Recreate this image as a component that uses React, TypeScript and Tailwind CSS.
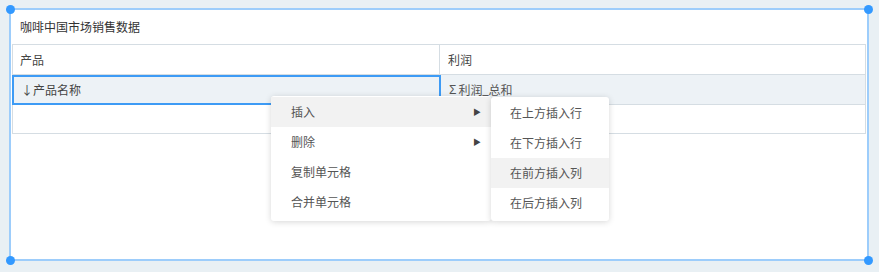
const mainItems = [
  { label: '插入', sub: true, active: true },
  { label: '删除', sub: true, active: false },
  { label: '复制单元格', sub: false, active: false },
  { label: '合并单元格', sub: false, active: false },
];

const subItems = ['在上方插入行', '在下方插入行', '在前方插入列', '在后方插入列'];

function Handle({ className }: { className: string }) {
  return <span className={`absolute h-[9px] w-[9px] rounded-full bg-[#3399ff] ${className}`} />;
}

export default function App() {
  return (
    <div
      className="relative h-[272px] w-[879px] bg-[#e9f0f4] pl-[9px] pt-[8px] text-[12px] text-[#333]"
      style={{ fontFamily: '"Noto Sans CJK SC", "Noto Sans", sans-serif' }}
    >
      <div className="relative flex h-[253px] w-[860px] flex-col border-2 border-[#9dcdfb] bg-white">
        <Handle className="-left-[5px] -top-[5px]" />
        <Handle className="-right-[6px] -top-[5px]" />
        <Handle className="-bottom-[6px] -left-[5px]" />
        <Handle className="-bottom-[6px] -right-[6px]" />

        <div className="flex h-[34px] items-center pl-[9px]">咖啡中国市场销售数据</div>

        <div className="mx-[1px] border border-[#d5dde3]">
          <div className="flex h-[30px] border-b border-[#d5dde3] text-[#444]">
            <div className="flex w-[427px] items-center border-r border-[#d5dde3] pl-[7px]">产品</div>
            <div className="flex flex-1 items-center pl-[8px]">利润</div>
          </div>
          <div className="flex h-[30px] border-b border-[#d5dde3] bg-[#edf2f6] text-[#444]">
            <div className="-mb-[1px] -ml-[1px] flex w-[429px] items-center border-2 border-[#3d9bf5] pl-[7px]">
              ↓产品名称
            </div>
            <div className="flex flex-1 items-center pl-[8px] leading-[16px] text-[#555]">
              <span className="mr-[2px] font-['Liberation_Sans']">Σ</span>
              <span>利润</span>
              <span className="relative -top-[1px] font-['DejaVu_Sans']">_</span>
              <span>总和</span>
            </div>
          </div>
          <div className="flex h-[28px]">
            <div className="w-[427px] border-r border-[#d5dde3]" />
            <div className="flex-1" />
          </div>
        </div>
      </div>

      <div className="absolute left-[271px] top-[96px] flex">
        <div className="w-[220px] rounded-[3px] bg-white py-[1px] shadow-[0_1px_6px_rgba(0,0,0,0.16)]">
          {mainItems.map((item) => (
            <div
              key={item.label}
              className={`flex h-[30px] items-center justify-between pl-[20px] pr-[10px] text-[#555] ${item.active ? 'bg-[#f2f2f2]' : ''}`}
            >
              <span>{item.label}</span>
              {item.sub && <span className="text-[8px] text-[#444]">▶</span>}
            </div>
          ))}
        </div>
        <div className="mt-[1px] h-[124px] w-[118px] rounded-[3px] bg-white pt-[1px] shadow-[0_1px_6px_rgba(0,0,0,0.16)]">
          {subItems.map((label, i) => (
            <div
              key={label}
              className={`flex h-[30px] items-center pl-[19px] text-[#555] ${i === 2 ? 'bg-[#f2f2f2]' : ''}`}
            >
              {label}
            </div>
          ))}
        </div>
      </div>
    </div>
  );
}
